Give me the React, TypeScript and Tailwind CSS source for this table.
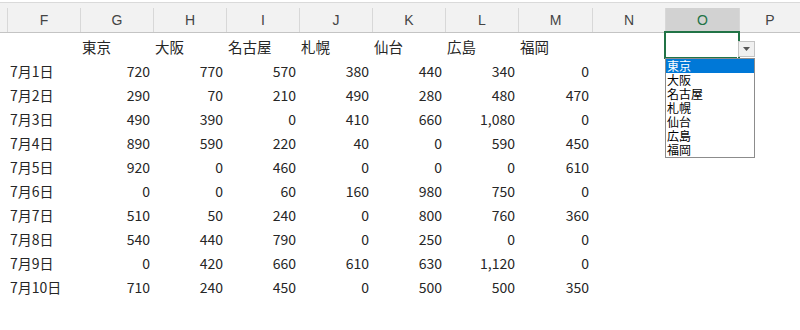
import React from "react";

const widths = [
  "w-[7px]",
  "w-[73px]",
  "w-[73px]",
  "w-[73px]",
  "w-[73px]",
  "w-[73px]",
  "w-[73px]",
  "w-[73px]",
  "w-[74px]",
  "w-[73px]",
  "w-[74px]",
  "w-[61px]",
];
const letters = ["", "F", "G", "H", "I", "J", "K", "L", "M", "N", "O", "P"];
const cities = ["東京", "大阪", "名古屋", "札幌", "仙台", "広島", "福岡"];
const rows: [string, string[]][] = [
  ["7月1日", ["720", "770", "570", "380", "440", "340", "0"]],
  ["7月2日", ["290", "70", "210", "490", "280", "480", "470"]],
  ["7月3日", ["490", "390", "0", "410", "660", "1,080", "0"]],
  ["7月4日", ["890", "590", "220", "40", "0", "590", "450"]],
  ["7月5日", ["920", "0", "460", "0", "0", "0", "610"]],
  ["7月6日", ["0", "0", "60", "160", "980", "750", "0"]],
  ["7月7日", ["510", "50", "240", "0", "800", "760", "360"]],
  ["7月8日", ["540", "440", "790", "0", "250", "0", "0"]],
  ["7月9日", ["0", "420", "660", "610", "630", "1,120", "0"]],
  ["7月10日", ["710", "240", "450", "0", "500", "500", "350"]],
];

export default function App() {
  return (
    <div className="relative w-[800px] h-[330px] bg-white overflow-hidden text-[#262626] font-['Noto_Sans_CJK_JP','Noto_Sans',sans-serif]">
      {/* column header */}
      <div className="h-[2px] bg-white" />
      <div className="h-px bg-[#dadada]" />
      <div className="flex h-[30px] items-end bg-[#f2f2f2] border-b border-[#c4c4c4]">
        {letters.map((l, i) => (
          <div
            key={i}
            className={`${widths[i]} h-[24px] shrink-0 flex items-center justify-center text-[14px] font-['Liberation_Sans',Arial,sans-serif] ${
              i > 0 ? "border-l border-[#d8d8d8]" : ""
            } ${l === "O" ? "bg-[#d2d2d2] text-[#217346]" : "text-[#444]"}`}
          >
            {l}
          </div>
        ))}
      </div>

      {/* city names row */}
      <div className="flex h-[24px]">
        <div className="w-[80px] shrink-0" />
        {cities.map((c, i) => (
          <div
            key={c}
            className={`${widths[i + 2]} shrink-0 flex items-end pl-[2px] text-[14.5px] leading-[20px]`}
          >
            {c}
          </div>
        ))}
      </div>

      {/* data rows */}
      {rows.map(([d, vals]) => (
        <div key={d} className="flex h-[24px]">
          <div className="w-[7px] shrink-0" />
          <div className="w-[73px] shrink-0 flex items-end pl-[3px] text-[14px] leading-[20px]">
            {d}
          </div>
          {vals.map((v, i) => (
            <div
              key={i}
              className={`${widths[i + 2]} shrink-0 flex items-end justify-end pr-[3px] text-[14px] leading-[20px]`}
            >
              {v}
            </div>
          ))}
        </div>
      ))}

      {/* selected cell */}
      <div className="absolute left-[664px] top-[31px] w-[76px] h-[28px] border-2 border-[#217346]" />
      <div className="absolute left-[737px] top-[56px] w-[4px] h-[4px] bg-[#217346] border border-white" />

      {/* dropdown button */}
      <div className="absolute left-[738px] top-[41px] w-[17px] h-[16px] bg-[#f0f0f0] border border-[#c3c3c3] flex items-center justify-center">
        <svg width="7" height="4" viewBox="0 0 7 4">
          <path d="M0 0 H7 L3.5 4 Z" fill="#555" />
        </svg>
      </div>

      {/* dropdown list */}
      <div className="absolute left-[665px] top-[58px] w-[90px] h-[100px] bg-white border border-[#8c8c8c] text-[12px] leading-[14px] text-black">
        {cities.map((c, i) => (
          <div
            key={c}
            className={`h-[14px] pl-[1px] ${i === 0 ? "bg-[#0078d7] text-white" : ""}`}
          >
            {c}
          </div>
        ))}
      </div>
    </div>
  );
}
